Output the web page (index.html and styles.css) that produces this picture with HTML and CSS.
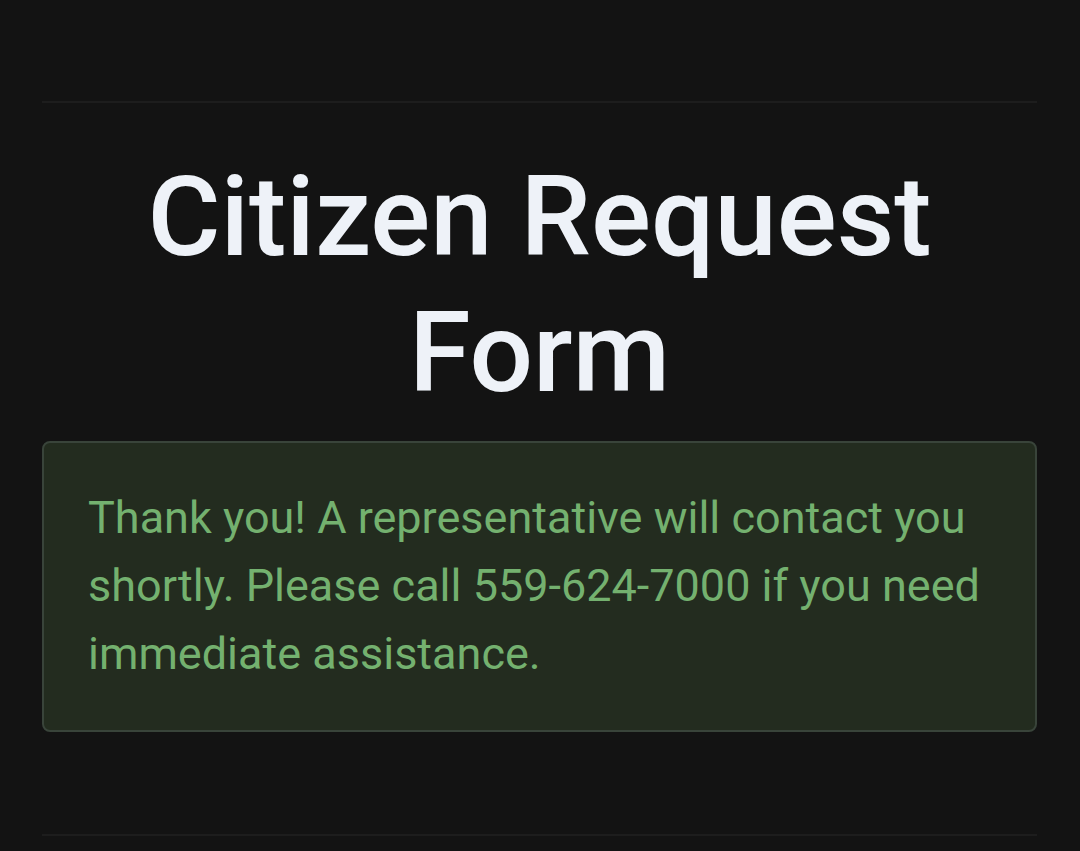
FILE: index.html
```html
<!DOCTYPE html>
<html>
<head>
<meta charset="utf-8">
<link rel="stylesheet" href="styles.css">
</head>
<body>
<div class="page">
  <hr class="rule">
  <h1 class="title">Citizen Request Form</h1>
  <div class="notice">Thank you! A representative will contact you shortly. Please call 559-624-7000 if you need immediate assistance.</div>
  <hr class="rule bottom">
</div>
</body>
</html>
```
FILE: styles.css
```css
html, body {
  margin: 0;
  padding: 0;
  background: #131313;
}
body {
  font-family: Roboto, "Liberation Sans", sans-serif;
}
.page {
  width: 995px;
  margin: 0 auto 0 42px;
  padding-top: 101px;
}
.rule {
  border: 0;
  height: 2px;
  background: #1d1d1d;
  margin: 0;
}
.title {
  margin: 46px 0 20px;
  text-align: center;
  font-size: 112px;
  line-height: 136px;
  font-weight: 500;
  color: #eef2f8;
}
.notice {
  background: #232c1f;
  border: 2px solid #39443a;
  border-radius: 8px;
  color: #74b16f;
  font-size: 45px;
  line-height: 68px;
  padding: 41px 44px 42px;
}
.bottom {
  margin-top: 102px;
}
```
